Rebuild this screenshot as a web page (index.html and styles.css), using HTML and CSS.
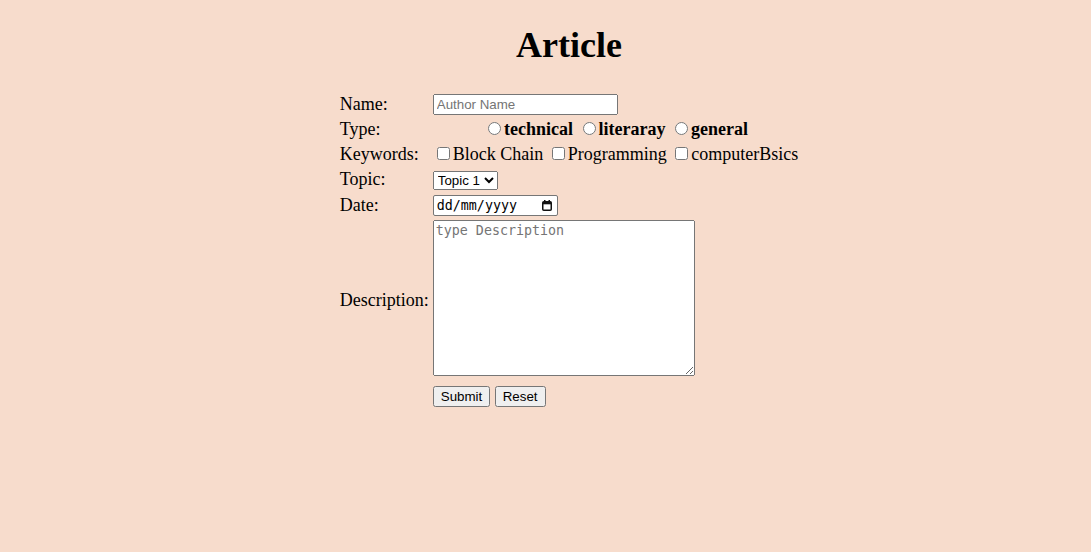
FILE: index.html
```html
<!DOCTYPE html>
<html lang="en-GB">
<head>
<meta charset="utf-8">
<title>Article</title>
<link rel="stylesheet" href="styles.css">
</head>
<body>
<div class="page">
  <h1 class="title">Article</h1>
  <form class="form">
    <label class="cell label" for="name">Name:</label>
    <div class="cell"><input class="text-input" id="name" type="text" placeholder="Author Name"></div>

    <div class="cell label">Type:</div>
    <div class="cell type-cell">
      <input type="radio" name="type" id="t1"><label for="t1">technical</label>
      <input type="radio" name="type" id="t2"><label for="t2">literaray</label>
      <input type="radio" name="type" id="t3"><label for="t3">general</label>
    </div>

    <div class="cell label">Keywords:</div>
    <div class="cell">
      <input type="checkbox" id="k1"><label for="k1">Block Chain</label>
      <input type="checkbox" id="k2"><label for="k2">Programming</label>
      <input type="checkbox" id="k3"><label for="k3">computerBsics</label>
    </div>

    <label class="cell label" for="topic">Topic:</label>
    <div class="cell">
      <select id="topic" class="select">
        <option>Topic 1</option>
        <option>Topic 2</option>
        <option>Topic 3</option>
      </select>
    </div>

    <label class="cell label" for="date">Date:</label>
    <div class="cell date-cell">
      <span class="date-field">
        <input class="date-text" id="date" type="text" placeholder="dd/mm/yyyy">
        <svg class="cal-icon" width="10" height="11" viewBox="0 0 10 11" aria-hidden="true">
          <rect x="2" y="0" width="1.5" height="2" fill="#111"/>
          <rect x="6.5" y="0" width="1.5" height="2" fill="#111"/>
          <rect x="0.75" y="1.75" width="8.5" height="8.5" rx="1" fill="none" stroke="#111" stroke-width="1.5"/>
          <rect x="1" y="2" width="8" height="2.3" fill="#111"/>
        </svg>
      </span>
    </div>

    <label class="cell label" for="desc">Description:</label>
    <div class="cell"><textarea class="desc" id="desc" placeholder="type Description"></textarea></div>

    <div class="cell"></div>
    <div class="cell">
      <button type="submit" class="btn">Submit</button>
      <button type="reset" class="btn">Reset</button>
    </div>
  </form>
</div>
</body>
</html>
```
FILE: styles.css
```css
html, body {
  background: #f7dccc;
}
body {
  margin: 8px;
  font-family: "Liberation Serif", "Times New Roman", serif;
  font-size: 18px;
  color: #000;
}
.page {
  padding-left: 47px;
}
.title {
  text-align: center;
  font-size: 36px;
  font-weight: bold;
  margin: 16px 0 24px;
}
.form {
  display: grid;
  grid-template-columns: auto auto;
  justify-content: center;
  align-items: center;
  gap: 2px;
  padding: 2px;
}
.cell {
  padding: 1px;
}
.type-cell {
  text-align: center;
  font-weight: bold;
}
.text-input {
  box-sizing: border-box;
  width: 185px;
  height: 21px;
  font-family: "Liberation Sans", Arial, sans-serif;
  font-size: 13.333px;
}
.select {
  font-family: "Liberation Sans", Arial, sans-serif;
  font-size: 13.333px;
}
.date-cell {
  display: flex;
  align-items: flex-end;
  height: 24px;
  box-sizing: border-box;
}
.date-field {
  display: inline-flex;
  align-items: center;
  box-sizing: border-box;
  width: 125px;
  height: 21px;
  border: 1px solid #767676;
  border-radius: 2px;
  background: #fff;
  padding: 0 5px 0 3px;
}
.date-text {
  border: none;
  outline: none;
  padding: 0;
  margin: 0;
  width: 96px;
  background: transparent;
  font-family: "DejaVu Sans Mono", monospace;
  font-size: 13.333px;
  color: #000;
}
.date-text::placeholder {
  color: #000;
  opacity: 1;
}
.cal-icon {
  margin-left: auto;
  display: block;
}
.desc {
  box-sizing: border-box;
  width: 262px;
  height: 156px;
  font-family: "DejaVu Sans Mono", monospace;
  font-size: 13.333px;
}
.btn {
  font-family: "Liberation Sans", Arial, sans-serif;
  font-size: 13.333px;
}
```
